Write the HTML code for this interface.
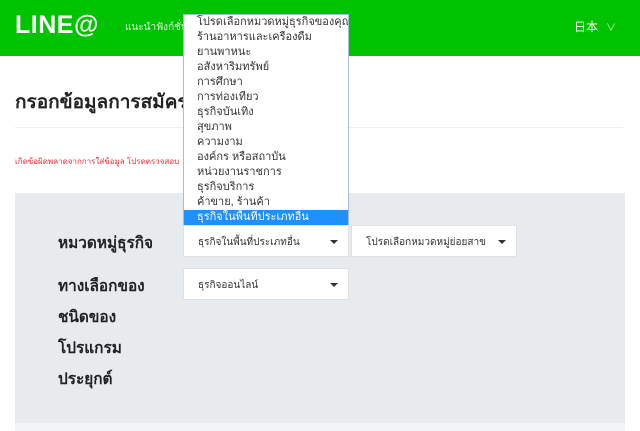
<!DOCTYPE html>
<html><head><meta charset="utf-8"><style>
*{margin:0;padding:0;box-sizing:border-box}
body{width:640px;height:431px;overflow:hidden;background:#fff;font-family:"Liberation Sans","Noto Sans CJK SC",sans-serif;position:relative}
.hdr{position:absolute;left:0;top:0;width:640px;height:56px;background:#00c300}
.logo{position:absolute;left:15px;top:11px;color:#fff;font-size:25px;font-weight:bold;letter-spacing:0.5px}
.nav{position:absolute;left:125px;top:20px;color:#d8f5d8;font-size:10px}
.lang{position:absolute;left:574px;top:18px;color:#fff;font-size:12px}
.lang span{color:#bfeebf;margin-left:8px;font-size:10px}
h1{position:absolute;left:15px;top:87px;font-size:19px;font-weight:bold;color:#222}
.hr{position:absolute;left:15px;top:127px;width:608px;height:1px;background:#eee}
.err{position:absolute;left:15px;top:155px;color:#e0303a;font-size:8px}
.panel{position:absolute;left:15px;top:193px;width:610px;height:230px;background:#e8ebee}
.below{position:absolute;left:15px;top:423px;width:610px;height:8px;background:#f3f4f6}
.lbl{position:absolute;left:58px;font-size:16px;font-weight:bold;color:#222;font-family:"Liberation Serif",serif;transform:scaleX(0.96);transform-origin:0 0;white-space:nowrap}
.sel{position:absolute;height:32px;background:#fff;border:1px solid #dfe2e5;font-size:10px;color:#333;padding:9px 0 0 14px}
.sel:after{content:"";position:absolute;right:10px;top:14px;border:4px solid transparent;border-top:4px solid #333;border-bottom:0}
.list{position:absolute;left:183px;top:14px;width:166px;height:211px;background:#fff;border:1px solid #a9bcd6;font-size:11px;color:#333}
.list div{height:15px;line-height:15px;padding-left:13px;white-space:nowrap;overflow:hidden}
.list .hl{background:#1e90ff;color:#fff}
</style></head><body>
<div class="hdr"><div class="logo">LINE@</div><div class="nav">แนะนำฟังก์ชั่น</div><div class="lang">日本<span>∨</span></div></div>
<h1>กรอกข้อมูลการสมัคร</h1>
<div class="hr"></div>
<div class="err">เกิดข้อผิดพลาดจากการใส่ข้อมูล โปรดตรวจสอบ</div>
<div class="panel"></div>
<div class="below"></div>
<div class="lbl" style="top:231px">หมวดหมู่ธุรกิจ</div>
<div class="lbl" style="top:274px">ทางเลือกของ</div>
<div class="lbl" style="top:305px">ชนิดของ</div>
<div class="lbl" style="top:336px">โปรแกรม</div>
<div class="lbl" style="top:367px">ประยุกต์</div>
<div class="sel" style="left:183px;top:225px;width:166px">ธุรกิจในพื้นที่ประเภทอื่น</div>
<div class="sel" style="left:351px;top:225px;width:166px">โปรดเลือกหมวดหมู่ย่อยสาข</div>
<div class="sel" style="left:183px;top:268px;width:166px">ธุรกิจออนไลน์</div>
<div class="list">
<div>โปรดเลือกหมวดหมู่ธุรกิจของคุณ</div>
<div>ร้านอาหารและเครื่องดื่ม</div>
<div>ยานพาหนะ</div>
<div>อสังหาริมทรัพย์</div>
<div>การศึกษา</div>
<div>การท่องเที่ยว</div>
<div>ธุรกิจบันเทิง</div>
<div>สุขภาพ</div>
<div>ความงาม</div>
<div>องค์กร หรือสถาบัน</div>
<div>หน่วยงานราชการ</div>
<div>ธุรกิจบริการ</div>
<div>ค้าขาย, ร้านค้า</div>
<div class="hl">ธุรกิจในพื้นที่ประเภทอื่น</div>
</div>
</body></html>
